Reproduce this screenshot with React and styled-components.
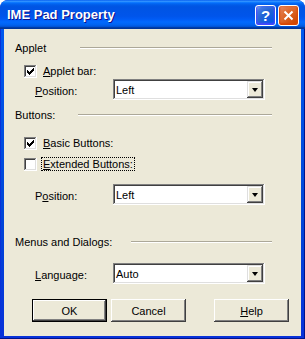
import React from "react";
import styled, { createGlobalStyle } from "styled-components";

const GlobalStyle = createGlobalStyle`
  html, body {
    margin: 0;
    padding: 0;
    background: #ffffff;
  }
  body {
    font-family: Tahoma, "Liberation Sans", Arial, sans-serif;
    font-size: 11px;
    color: #000;
  }
`;

const Window = styled.div`
  width: 305px;
  height: 339px;
  display: flex;
  flex-direction: column;
  border-radius: 8px 8px 0 0;
  overflow: hidden;
  background: #0831d9;
`;

const TitleBar = styled.div`
  height: 29px;
  flex: none;
  display: flex;
  align-items: center;
  justify-content: space-between;
  padding: 0 6px 0 7px;
  background: linear-gradient(
    to bottom,
    #0058ee 0%,
    #3593ff 4%,
    #288eff 6%,
    #127dff 8%,
    #036ffc 10%,
    #0262ee 14%,
    #0057e5 20%,
    #0054e3 24%,
    #0055eb 56%,
    #005bf5 66%,
    #026afe 76%,
    #0062ef 86%,
    #0052d6 92%,
    #0040ab 94%,
    #003092 100%
  );
`;

const Title = styled.span`
  font-family: "Liberation Sans", Arial, sans-serif;
  font-weight: bold;
  font-size: 13px;
  color: #ffffff;
  text-shadow: 1px 1px #0f1089;
  letter-spacing: 0;
`;

const Controls = styled.div`
  display: flex;
  gap: 2px;
  margin-top: 1px;
`;

const CaptionButton = styled.div`
  width: 21px;
  height: 21px;
  box-sizing: border-box;
  border: 1px solid #ffffff;
  border-radius: 3px;
  display: flex;
  align-items: center;
  justify-content: center;
  background: ${({ close }) =>
    close
      ? "radial-gradient(circle at 90% 90%, #cc4600 0%, #dc6527 55%, #e27b4b 80%, #e89171 100%)"
      : "radial-gradient(circle at 90% 90%, #0054e9 0%, #2263d5 55%, #4479e4 80%, #a3bbec 100%)"};
  box-shadow: inset 0 -1px 2px 1px ${({ close }) => (close ? "#da4600" : "#4646ff")};
`;

const HelpGlyph = styled.span`
  font-family: "Liberation Sans", Arial, sans-serif;
  font-weight: bold;
  font-size: 15px;
  line-height: 1;
  color: #ffffff;
`;

const Frame = styled.div`
  flex: 1;
  display: flex;
  padding: 0 4px 3px 4px;
  background: linear-gradient(to bottom, #0058ee, #0046d8 60%, #0831d9);
  box-shadow: inset -1px -1px #00138c, inset 1px 0 #0831d9;
`;

const Client = styled.div`
  flex: 1;
  background: #ece9d8;
  padding: 11px 0 0 11px;
  display: flex;
  flex-direction: column;
`;

const Row = styled.div`
  display: flex;
  align-items: center;
  height: ${({ h }) => h || 16}px;
  margin-top: ${({ top }) => top || 0}px;
  padding-left: ${({ indent }) => indent || 0}px;
`;

const GroupLabel = styled.span`
  width: ${({ w }) => w}px;
  flex: none;
  white-space: nowrap;
`;

const Etched = styled.div`
  flex: 1;
  margin-right: 29px;
  height: 0;
  border-top: 1px solid #aca899;
  border-bottom: 1px solid #ffffff;
`;

const CheckBox = styled.div`
  width: 13px;
  height: 13px;
  flex: none;
  box-sizing: border-box;
  background: #ffffff;
  box-shadow: inset -1px -1px #ffffff, inset 1px 1px #808080,
    inset -2px -2px #dfdfdf, inset 2px 2px #404040;
  display: flex;
  align-items: center;
  justify-content: center;
`;

const CheckLabel = styled.span`
  margin-left: 4px;
  padding: 0 1px;
  border: 1px dotted ${({ focused }) => (focused ? "#000" : "transparent")};
  line-height: 12px;
  white-space: nowrap;
`;

const FieldLabel = styled.span`
  width: 78px;
  flex: none;
  padding-top: ${({ drop }) => drop || 0}px;
  white-space: nowrap;
`;

const Combo = styled.div`
  width: 152px;
  height: 21px;
  box-sizing: border-box;
  padding: 2px;
  display: flex;
  background: #ffffff;
  box-shadow: inset -1px -1px #ffffff, inset 1px 1px #808080,
    inset -2px -2px #dfdfdf, inset 2px 2px #404040;
`;

const ComboText = styled.span`
  flex: 1;
  padding-left: 1px;
  display: flex;
  align-items: center;
`;

const DropButton = styled.div`
  width: 16px;
  flex: none;
  background: #ece9d8;
  display: flex;
  align-items: center;
  justify-content: center;
  box-shadow: inset -1px -1px #404040, inset 1px 1px #dfdfdf,
    inset -2px -2px #808080, inset 2px 2px #ffffff;
`;

const Arrow = styled.div`
  width: 0;
  height: 0;
  border-left: 3.5px solid transparent;
  border-right: 3.5px solid transparent;
  border-top: 4px solid #000;
  margin-top: 1px;
`;

const ButtonRow = styled.div`
  display: flex;
  margin-top: 15px;
  padding-left: 17px;
`;

const Button = styled.div`
  width: 75px;
  height: 23px;
  box-sizing: border-box;
  margin-left: ${({ gap }) => gap || 0}px;
  display: flex;
  align-items: center;
  justify-content: center;
  background: #ece9d8;
  border: ${({ primary }) => (primary ? "1px solid #000" : "none")};
  box-shadow: inset -1px -1px #404040, inset 1px 1px #ffffff,
    inset -2px -2px #808080, inset 2px 2px #ece9d8;
`;

const CheckMark = () => (
  <svg width="7" height="7" viewBox="0 0 7 7">
    <path
      d="M0 2h1v1h1v1h1v-1h1v-1h1v-1h1v-1h1v3h-1v1h-1v1h-1v1h-1v1h-1v-1h-1v-1h-1z"
      fill="#000"
    />
  </svg>
);

const CloseGlyph = () => (
  <svg width="11" height="11" viewBox="0 0 11 11">
    <path d="M1.5 1.5L9.5 9.5M9.5 1.5L1.5 9.5" stroke="#fff" strokeWidth="2" />
  </svg>
);

const Check = ({ checked, focused, children }) => (
  <>
    <CheckBox>{checked && <CheckMark />}</CheckBox>
    <CheckLabel focused={focused}>{children}</CheckLabel>
  </>
);

const Select = ({ value }) => (
  <Combo>
    <ComboText>{value}</ComboText>
    <DropButton>
      <Arrow />
    </DropButton>
  </Combo>
);

export default function App() {
  return (
    <>
      <GlobalStyle />
      <Window>
        <TitleBar>
          <Title>IME Pad Property</Title>
          <Controls>
            <CaptionButton>
              <HelpGlyph>?</HelpGlyph>
            </CaptionButton>
            <CaptionButton close>
              <CloseGlyph />
            </CaptionButton>
          </Controls>
        </TitleBar>
        <Frame>
          <Client>
            <Row>
              <GroupLabel w={65}>Applet</GroupLabel>
              <Etched />
            </Row>
            <Row top={7} indent={9}>
              <Check checked>
                <u>A</u>pplet bar:
              </Check>
            </Row>
            <Row h={21} indent={20}>
              <FieldLabel drop={3}>
                <u>P</u>osition:
              </FieldLabel>
              <Select value="Left" />
            </Row>

            <Row top={7}>
              <GroupLabel w={63}>Buttons:</GroupLabel>
              <Etched />
            </Row>
            <Row top={12} indent={9}>
              <Check checked>
                <u>B</u>asic Buttons:
              </Check>
            </Row>
            <Row top={5} indent={9}>
              <Check focused>
                <u>E</u>xtended Buttons:
              </Check>
            </Row>
            <Row h={21} top={12} indent={20}>
              <FieldLabel drop={2}>
                P<u>o</u>sition:
              </FieldLabel>
              <Select value="Left" />
            </Row>

            <Row top={29}>
              <GroupLabel w={116}>Menus and Dialogs:</GroupLabel>
              <Etched />
            </Row>
            <Row h={21} top={13} indent={20}>
              <FieldLabel drop={2}>
                <u>L</u>anguage:
              </FieldLabel>
              <Select value="Auto" />
            </Row>

            <ButtonRow>
              <Button primary>OK</Button>
              <Button gap={4}>Cancel</Button>
              <Button gap={28}>
                <span>
                  <u>H</u>elp
                </span>
              </Button>
            </ButtonRow>
          </Client>
        </Frame>
      </Window>
    </>
  );
}
